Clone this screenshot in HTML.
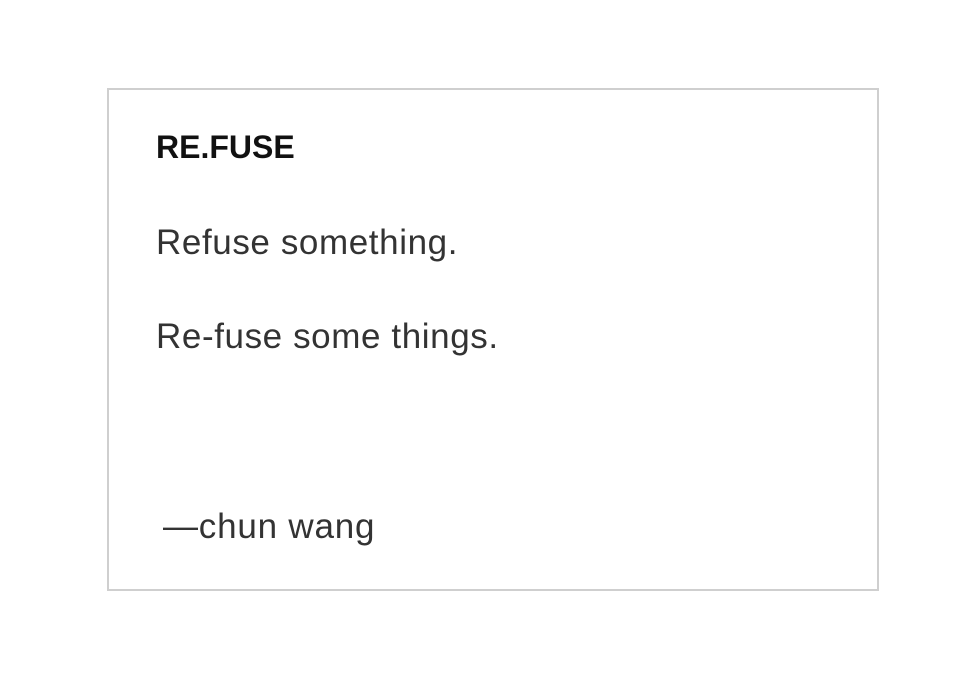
<!DOCTYPE html>
<html><head><style>
html,body{margin:0;padding:0;background:#fff;width:973px;height:674px;overflow:hidden}
.box{position:absolute;left:107px;top:88px;width:768px;height:499px;border:2px solid #cfcfcf}
.t{position:absolute;left:156px;font-family:"Liberation Sans",sans-serif;color:#333;white-space:nowrap;line-height:1}
</style></head><body>
<div class="box"></div>
<div class="t" style="top:131px;font-size:32px;font-weight:bold;color:#111">RE.FUSE</div>
<div class="t" style="top:225px;font-size:35px;letter-spacing:0.6px">Refuse something.</div>
<div class="t" style="top:319px;font-size:35px;letter-spacing:0.6px">Re-fuse some things.</div>
<div class="t" style="left:163px;top:509px;font-size:35px;letter-spacing:0.8px">—chun wang</div>
</body></html>
